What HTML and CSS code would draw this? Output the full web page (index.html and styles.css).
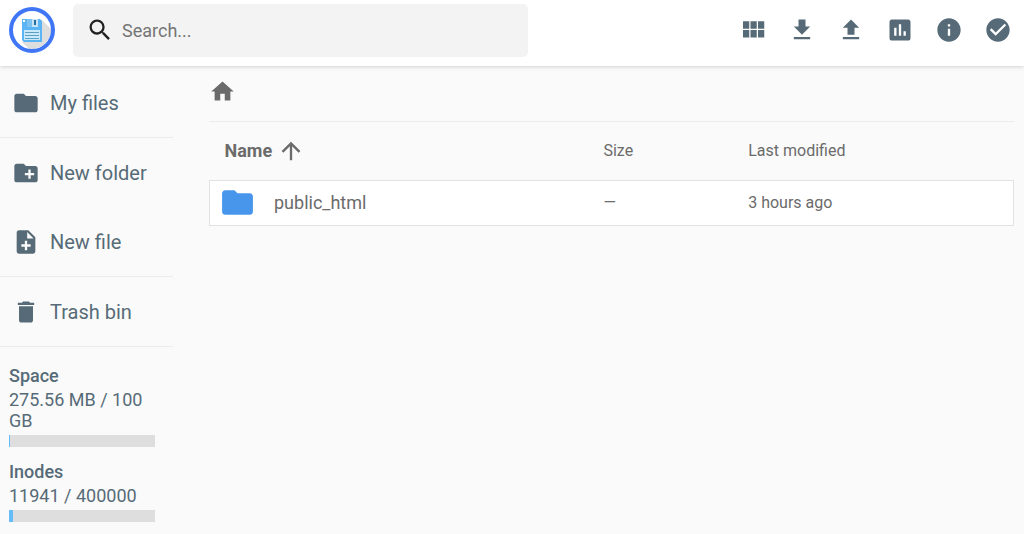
FILE: index.html
```html
<!DOCTYPE html>
<html lang="en">
<head>
    <meta charset="UTF-8">
    <meta name="viewport" content="width=device-width, initial-scale=1.0">
    <title>File Manager</title>
    <link rel="stylesheet" href="styles.css">
</head>
<body>
    <header class="topbar">
        <a href="#" class="logo" aria-label="File manager">
            <svg viewBox="0 0 46 46" width="46" height="46">
                <circle cx="23" cy="23" r="21" fill="#fff"/>
                <path d="M33 13l9 9v6l-7 10-9 4h-6l-7-7z" fill="#dedede"/>
                <circle cx="23" cy="23" r="21" fill="none" stroke="#3f76f6" stroke-width="4"/>
                <path d="M13 12h18l2 2v21H15l-2-2z" fill="#5bb5f5"/>
                <rect x="14" y="13" width="2" height="2" fill="#fff"/>
                <path d="M18 12h11v8H18z" fill="#c8e4f6"/>
                <path d="M18 12h5v8h-5z" fill="#7cc2f0"/>
                <path d="M25 13h2v5h-2z" fill="#256d9e"/>
                <rect x="15" y="23" width="16" height="10" fill="#c9e9fb"/>
                <path d="M16 25.500h14M16 28.500h14M16 31.500h14" stroke="#5d9fc5" fill="none"/>
            </svg>
        </a>
        <form class="search">
            <label for="search" aria-label="Search">
                <svg viewBox="0 0 24 24" width="28" height="28"><path d="M15.500 14h-.79l-.28-.27A6.471 6.471 0 0 0 16 9.500 6.500 6.500 0 1 0 9.500 16c1.610 0 3.090-.59 4.230-1.570l.27.28v.79l5 4.990L20.490 19l-4.990-5zm-6 0C7.010 14 5 11.990 5 9.500S7.010 5 9.500 5 14 7.010 14 9.500 11.990 14 9.500 14z"/></svg>
            </label>
            <input type="text" id="search" placeholder="Search...">
        </form>
        <div class="actions">
            <button type="button" aria-label="Grid view">
                <svg viewBox="0 0 24 24" width="30" height="30"><path d="M4 11h5V5H4v6zm0 7h5v-6H4v6zm6 0h5v-6h-5v6zm6 0h5v-6h-5v6zm-6-7h5V5h-5v6zm6-6v6h5V5h-5z"/></svg>
            </button>
            <button type="button" aria-label="Download">
                <svg viewBox="0 0 24 24" width="28" height="28"><path d="M19 9h-4V3H9v6H5l7 7 7-7zM5 18v2h14v-2H5z"/></svg>
            </button>
            <button type="button" aria-label="Upload">
                <svg viewBox="0 0 24 24" width="28" height="28"><path d="M9 16h6v-6h4l-7-7-7 7h4zm-4 2h14v2H5z"/></svg>
            </button>
            <button type="button" aria-label="Statistics">
                <svg viewBox="0 0 24 24" width="28" height="28"><path d="M19 3H5c-1.100 0-2 .9-2 2v14c0 1.100.9 2 2 2h14c1.100 0 2-.9 2-2V5c0-1.100-.9-2-2-2zM9 17H7v-7h2v7zm4 0h-2V7h2v10zm4 0h-2v-4h2v4z"/></svg>
            </button>
            <button type="button" aria-label="Information">
                <svg viewBox="0 0 24 24" width="28" height="28"><path d="M12 2C6.480 2 2 6.480 2 12s4.480 10 10 10 10-4.480 10-10S17.520 2 12 2zm1 15h-2v-6h2v6zm0-8h-2V7h2v2z"/></svg>
            </button>
            <button type="button" aria-label="Select all">
                <svg viewBox="0 0 24 24" width="28" height="28"><path d="M12 2C6.480 2 2 6.480 2 12s4.480 10 10 10 10-4.480 10-10S17.520 2 12 2zm-2 15l-5-5 1.410-1.410L10 14.170l7.590-7.590L19 8l-9 9z"/></svg>
            </button>
        </div>
    </header>

    <div class="layout">
        <aside class="sidebar">
            <nav>
                <div class="menu-group">
                    <a href="#">
                        <svg viewBox="0 0 24 24" width="28" height="28"><path d="M10 4H4c-1.100 0-1.990.9-1.990 2L2 18c0 1.100.9 2 2 2h16c1.100 0 2-.9 2-2V8c0-1.100-.9-2-2-2h-8l-2-2z"/></svg>
                        My files
                    </a>
                </div>
                <div class="menu-group">
                    <a href="#">
                        <svg viewBox="0 0 24 24" width="28" height="28"><path d="M20 6h-8l-2-2H4c-1.110 0-1.990.89-1.990 2L2 18c0 1.110.89 2 2 2h16c1.110 0 2-.89 2-2V8c0-1.110-.89-2-2-2zm-1 8h-3v3h-2v-3h-3v-2h3V9h2v3h3v2z"/></svg>
                        New folder
                    </a>
                    <a href="#">
                        <svg viewBox="0 0 24 24" width="28" height="28"><path d="M14 2H6c-1.100 0-1.990.9-1.990 2L4 20c0 1.100.89 2 1.990 2H18c1.100 0 2-.9 2-2V8l-6-6zm2 14h-3v3h-2v-3H8v-2h3v-3h2v3h3v2zm-3-7V3.500L18.500 9H13z"/></svg>
                        New file
                    </a>
                </div>
                <div class="menu-group">
                    <a href="#">
                        <svg viewBox="0 0 24 24" width="28" height="28"><path d="M6 19c0 1.100.9 2 2 2h8c1.100 0 2-.9 2-2V7H6v12zM19 4h-3.500l-1-1h-5l-1 1H5v2h14V4z"/></svg>
                        Trash bin
                    </a>
                </div>
            </nav>

            <!-- Disk usage -->
            <div class="usage">
                <h2>Space</h2>
                <p>275.56 MB / 100 GB</p>
                <div class="bar"><div class="bar-fill" style="width: 0.28%"></div></div>
            </div>
            <div class="usage">
                <h2>Inodes</h2>
                <p>11941 / 400000</p>
                <div class="bar"><div class="bar-fill" style="width: 2.99%"></div></div>
            </div>
        </aside>

        <main class="content">
            <div class="breadcrumb">
                <a href="#" aria-label="Home">
                    <svg viewBox="0 0 24 24" width="27" height="27"><path d="M10 20v-6h4v6h5v-8h3L12 3 2 12h3v8z"/></svg>
                </a>
            </div>
            <table class="files">
                <thead>
                    <tr>
                        <th class="col-name">
                            <div class="cell">
                                Name
                                <svg viewBox="0 0 24 24" width="28" height="28"><path d="M4 12l1.410 1.410L11 7.830V20h2V7.830l5.580 5.590L20 12l-8-8-8 8z"/></svg>
                            </div>
                        </th>
                        <th class="col-size">Size</th>
                        <th class="col-date">Last modified</th>
                    </tr>
                </thead>
                <tbody>
                    <tr>
                        <td>
                            <div class="cell">
                                <svg viewBox="0 0 24 24" width="37" height="37"><path d="M10 4H4c-1.100 0-1.990.9-1.990 2L2 18c0 1.100.9 2 2 2h16c1.100 0 2-.9 2-2V8c0-1.100-.9-2-2-2h-8l-2-2z"/></svg>
                                <a href="#">public_html</a>
                            </div>
                        </td>
                        <td>—</td>
                        <td>3 hours ago</td>
                    </tr>
                </tbody>
            </table>
        </main>
    </div>
</body>
</html>
```
FILE: styles.css
```css
* {
    margin: 0;
    padding: 0;
    box-sizing: border-box;
}

body {
    background-color: #fafafa;
    color: #6b6b6b;
    font-family: Roboto, "Liberation Sans", sans-serif;
    font-size: 16px;
}

svg {
    display: block;
    flex-shrink: 0;
    fill: currentColor;
}

a {
    color: inherit;
    text-decoration: none;
}

/* Top bar */
.topbar {
    display: flex;
    align-items: center;
    height: 66px;
    padding: 0 2px 6px 9px;
    background-color: #fff;
    box-shadow: 0 1px 4px rgba(0, 0, 0, 0.16);
}

.search {
    display: flex;
    align-items: center;
    flex: 0 1 455px;
    height: 53px;
    margin-left: 18px;
    padding: 0 13px;
    background-color: #f3f3f3;
    border-radius: 5px;
}

.search label {
    color: #212121;
}

.search input {
    flex: 1;
    min-width: 0;
    margin-left: 8px;
    border: none;
    outline: none;
    background: none;
    font-family: inherit;
    font-size: 18px;
    color: #212121;
}

.search input::placeholder {
    color: #757575;
    opacity: 1;
}

.actions {
    display: flex;
    margin-left: auto;
}

.actions button {
    display: flex;
    align-items: center;
    justify-content: center;
    width: 49px;
    height: 48px;
    border: none;
    background: none;
    color: #566b77;
    cursor: pointer;
}

.layout {
    display: flex;
}

/* Sidebar */
.sidebar {
    flex: 0 0 173px;
    padding-top: 2px;
    color: #566b77;
}

.menu-group {
    border-bottom: 1px solid #ececec;
}

.menu-group a {
    display: flex;
    align-items: center;
    gap: 10px;
    height: 69px;
    padding-left: 12px;
    font-size: 20px;
}

.usage {
    padding: 0 18px 0 9px;
    margin-top: 14px;
    font-size: 18px;
    line-height: 21px;
}

.usage h2 {
    margin-bottom: 3px;
    font-size: 18px;
    font-weight: 500;
}

.usage:first-of-type {
    margin-top: 18px;
}

.bar {
    height: 12px;
    margin-top: 4px;
    background-color: #dedede;
}

.bar-fill {
    height: 100%;
    background-color: #64bcf8;
}

/* File list */
.content {
    flex: 1;
    min-width: 0;
    padding: 0 10px 0 36px;
}

.breadcrumb {
    display: flex;
    align-items: center;
    height: 56px;
    padding-bottom: 4px;
    border-bottom: 1px solid #ececec;
}

.files {
    width: 100%;
    border-collapse: collapse;
    table-layout: fixed;
}

.files th {
    height: 58px;
    font-size: 16px;
    font-weight: 400;
    text-align: left;
}

.files .col-name {
    padding-left: 15px;
    font-size: 18px;
    font-weight: 700;
}

.col-size {
    width: 18%;
}

.col-date {
    width: 33%;
}

.col-name .cell {
    gap: 5px;
}

.cell {
    display: flex;
    align-items: center;
    gap: 18px;
}

.files tbody tr {
    background-color: #fff;
    border: 1px solid #e2e2e2;
}

.files td {
    height: 45px;
}

.files td:first-child {
    padding-left: 9px;
    font-size: 18px;
}

.files td svg {
    color: #4896ec;
}
```
